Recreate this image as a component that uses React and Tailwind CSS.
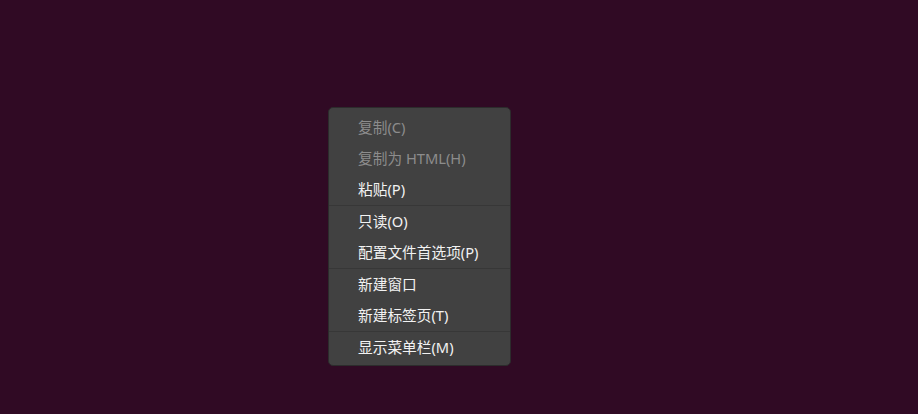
// Terminal context menu on the Ubuntu aubergine background
const groups = [
  [
    { label: '复制(C)', disabled: true },
    { label: '复制为 HTML(H)', disabled: true },
    { label: '粘贴(P)' },
  ],
  [{ label: '只读(O)' }, { label: '配置文件首选项(P)' }],
  [{ label: '新建窗口' }, { label: '新建标签页(T)' }],
  [{ label: '显示菜单栏(M)' }],
];

function MenuItem({ label, disabled }) {
  return (
    <div
      className={`h-[31px] flex items-center pl-[29px] pr-4 text-[14.7px] ${
        disabled ? 'text-[#8c8c8c]' : 'text-[#f2f2f2]'
      }`}
    >
      {label}
    </div>
  );
}

export default function App() {
  return (
    <div
      className="w-[918px] h-[414px] bg-[#300a24] pt-[107px] pl-[328px]"
      style={{ fontFamily: '"Noto Sans", "Noto Sans CJK SC", sans-serif' }}
    >
      {/* Menu */}
      <div className="w-[183px] h-[259px] bg-[#414141] rounded-[5px] border border-[#2c2c2c] pt-[4px] pb-[3px] flex flex-col">
        {groups.map((group, gi) => (
          <div key={gi} className={gi > 0 ? 'border-t border-[#373737]' : ''}>
            {group.map((item) => (
              <MenuItem key={item.label} {...item} />
            ))}
          </div>
        ))}
      </div>
    </div>
  );
}
